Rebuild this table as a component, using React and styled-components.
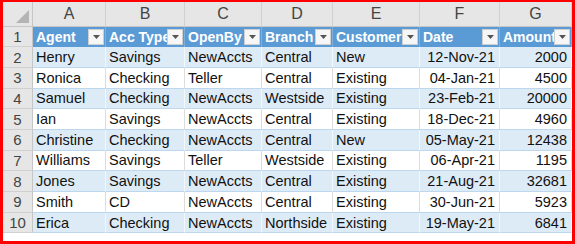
import React from "react";
import styled, { createGlobalStyle } from "styled-components";

const Global = createGlobalStyle`
  html, body { margin: 0; padding: 0; background: #ffffff; }
  #root { width: 575px; height: 244px; }
`;

const Frame = styled.div`
  box-sizing: border-box;
  width: 575px;
  height: 244px;
  border-style: solid;
  border-color: #ff0000;
  border-width: 2px 3px 3px 3px;
  background: #ffffff;
  overflow: hidden;
  font-family: "Liberation Sans", Arial, sans-serif;
`;

const Grid = styled.div`
  display: grid;
  grid-template-columns: 30px 73px 79px 77px 71px 87px 80px 72px;
  grid-template-rows: 24.5px repeat(10, 20.7px);
`;

const Corner = styled.div`
  background: #e6e6e6;
  border-right: 1px solid #c6c6c6;
  border-bottom: 1px solid #c6c6c6;
  box-sizing: border-box;
  display: flex;
  align-items: flex-end;
  justify-content: flex-end;
  padding: 0 3px 3px 0;
`;

const ColLetter = styled.div`
  background: #e6e6e6;
  border-right: 1px solid #d0d0d0;
  border-bottom: 1px solid #c6c6c6;
  box-sizing: border-box;
  display: flex;
  align-items: center;
  justify-content: center;
  color: #444444;
  font-size: 16px;
`;

const RowNum = styled.div`
  background: #e6e6e6;
  border-right: 1px solid #c6c6c6;
  border-bottom: 1px solid #d0d0d0;
  box-sizing: border-box;
  display: flex;
  align-items: center;
  justify-content: center;
  color: #444444;
  font-size: 15px;
`;

const HeadCell = styled.div`
  position: relative;
  background: #5b9bd5;
  color: #ffffff;
  font-weight: bold;
  font-size: 14px;
  box-sizing: border-box;
  border-right: 1px solid #7fb0dd;
  display: flex;
  align-items: center;
  padding-left: 3px;
  white-space: nowrap;
  overflow: hidden;
`;

const FilterBtn = styled.span`
  position: absolute;
  right: 1px;
  top: 2px;
  width: 16px;
  height: 16px;
  box-sizing: border-box;
  background: #f6f6f6;
  border: 1px solid #cfcfcf;
  display: flex;
  align-items: center;
  justify-content: center;
`;

const Cell = styled.div`
  background: ${(p) => (p.$band ? "#ddebf7" : "#ffffff")};
  border-right: 1px solid ${(p) => (p.$band ? "#f2f7fc" : "#dcdcdc")};
  border-bottom: 1px solid #bdd7ee;
  box-sizing: border-box;
  display: flex;
  align-items: center;
  justify-content: ${(p) => (p.$right ? "flex-end" : "flex-start")};
  padding: 0 4px 0 3px;
  font-size: 14.5px;
  color: #111111;
  white-space: nowrap;
  overflow: hidden;
`;

const Arrow = () => (
  <svg width="7" height="4" viewBox="0 0 7 4">
    <path d="M0 0 L7 0 L3.5 4 Z" fill="#555555" />
  </svg>
);

const CornerTri = () => (
  <svg width="13" height="13" viewBox="0 0 13 13">
    <path d="M13 0 L13 13 L0 13 Z" fill="#b4b4b4" />
  </svg>
);

const headers = ["Agent", "Acc Type", "OpenBy", "Branch", "Customer", "Date", "Amount"];
const letters = ["A", "B", "C", "D", "E", "F", "G"];
const rows = [
  ["Henry", "Savings", "NewAccts", "Central", "New", "12-Nov-21", "2000"],
  ["Ronica", "Checking", "Teller", "Central", "Existing", "04-Jan-21", "4500"],
  ["Samuel", "Checking", "NewAccts", "Westside", "Existing", "23-Feb-21", "20000"],
  ["Ian", "Savings", "NewAccts", "Central", "Existing", "18-Dec-21", "4960"],
  ["Christine", "Checking", "NewAccts", "Central", "New", "05-May-21", "12438"],
  ["Williams", "Savings", "Teller", "Westside", "Existing", "06-Apr-21", "1195"],
  ["Jones", "Savings", "NewAccts", "Central", "Existing", "21-Aug-21", "32681"],
  ["Smith", "CD", "NewAccts", "Central", "Existing", "30-Jun-21", "5923"],
  ["Erica", "Checking", "NewAccts", "Northside", "Existing", "19-May-21", "6841"],
];

export default function App() {
  return (
    <>
      <Global />
      <Frame>
        <Grid>
          <Corner>
            <CornerTri />
          </Corner>
          {letters.map((l) => (
            <ColLetter key={l}>{l}</ColLetter>
          ))}
          <RowNum>1</RowNum>
          {headers.map((h) => (
            <HeadCell key={h}>
              {h}
              <FilterBtn>
                <Arrow />
              </FilterBtn>
            </HeadCell>
          ))}
          {rows.map((r, i) => (
            <React.Fragment key={i}>
              <RowNum>{i + 2}</RowNum>
              {r.map((v, j) => (
                <Cell key={j} $band={i % 2 === 0} $right={j >= 5}>
                  {v}
                </Cell>
              ))}
            </React.Fragment>
          ))}
        </Grid>
      </Frame>
    </>
  );
}
